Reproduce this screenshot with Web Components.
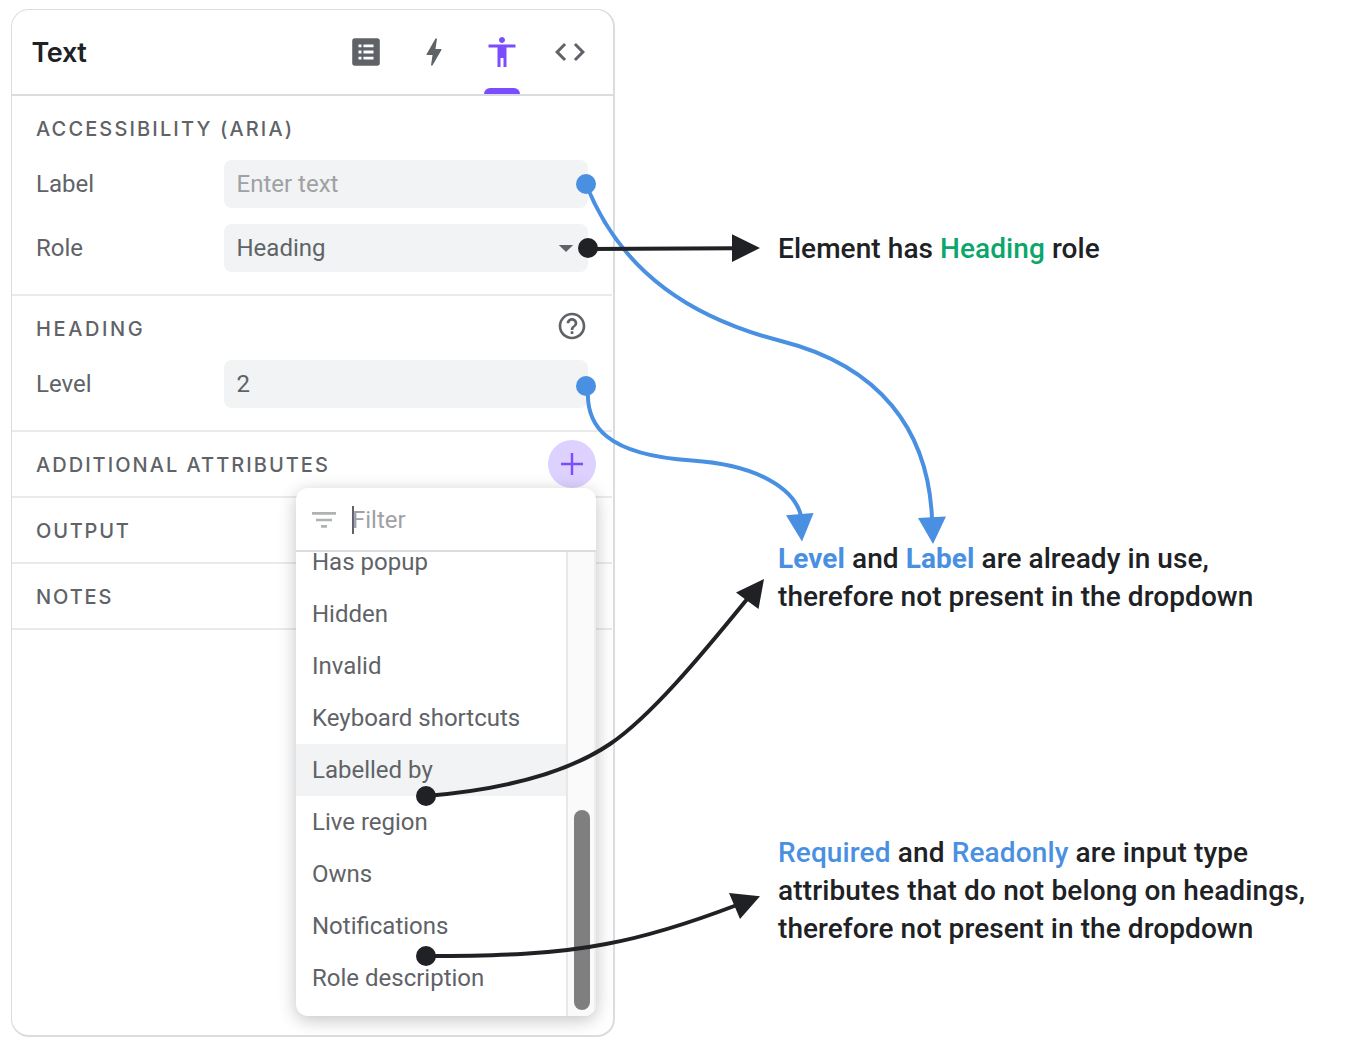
<!DOCTYPE html>
<html lang="en">
<head>
<meta charset="utf-8">
<title>Accessibility attributes</title>
<style>
html,body{margin:0;padding:0;background:#fff}
body{width:1360px;height:1048px;overflow:hidden;font-family:Roboto,"Liberation Sans",sans-serif}
</style>
</head>
<body>
<attribute-guide></attribute-guide>
<script>
const define = (name, css, html) => customElements.define(name, class extends HTMLElement {
  constructor() {
    super();
    const t = document.createElement('template');
    t.innerHTML = `<style>*{box-sizing:border-box}${css}</style>${html}`;
    this.attachShadow({mode: 'open'}).append(t.content.cloneNode(true));
  }
});

define('tab-icon', `
:host{display:flex;width:68px;height:84px;flex-direction:column;align-items:center;justify-content:space-between;color:#5f6368;padding-top:24px;box-sizing:border-box}
:host([active]){color:#7c4dff}
i{display:block;width:36px;height:6px;border-radius:6px 6px 0 0}
:host([active]) i{background:#7c4dff}
::slotted(svg){display:block;width:36px;height:36px;fill:currentColor}`,
`<slot></slot><i></i>`);

define('panel-header', `
:host{display:flex;height:86px;box-sizing:border-box;border-bottom:2px solid #dadce0;padding-left:19.5px;padding-right:9px;justify-content:space-between;align-items:center}
h1{margin:0;padding-top:2px;font:560 27px/36px Inter,sans-serif;letter-spacing:-.35px;color:#202124}
nav{display:flex}`,
`<h1><slot></slot></h1><nav>
<tab-icon><svg viewBox="0 0 24 24"><path fill-rule="evenodd" d="M4.6 2.8h14.8a1.8 1.8 0 0 1 1.8 1.8v14.8a1.8 1.8 0 0 1-1.8 1.8H4.6a1.8 1.8 0 0 1-1.8-1.8V4.6a1.8 1.8 0 0 1 1.8-1.8zM7 7v1.9h2V7zM10.3 7v1.9H17V7zM7 11v2h2v-2zM10.3 11v2H17v-2zM7 15.1V17h2v-1.9zM10.3 15.1V17H17v-1.9z"/></svg></tab-icon>
<tab-icon><svg viewBox="0 0 24 24"><path d="M11 21h-1l1-7H7.5c-.58 0-.57-.32-.38-.66.19-.34.05-.08.07-.12C8.48 10.94 10.42 7.54 13 3h1l-1 7h3.5c.49 0 .56.33.47.51l-.07.15C12.96 17.55 11 21 11 21z"/></svg></tab-icon>
<tab-icon active><svg viewBox="0 0 24 24"><path d="M12 2c1.1 0 2 .9 2 2s-.9 2-2 2-2-.9-2-2 .9-2 2-2zm9 7h-6v13h-2v-6h-2v6H9V9H3V7h18v2z"/></svg></tab-icon>
<tab-icon><svg viewBox="0 0 24 24"><path d="M9.4 16.6L4.8 12l4.6-4.6L8 6l-6 6 6 6 1.4-1.4zm5.2 0l4.6-4.6-4.6-4.6L16 6l6 6-6 6-1.4-1.4z"/></svg></tab-icon>
</nav>`);

define('panel-section', `
:host{display:block;border-bottom:2px solid #e8eaed;padding:0 24px;color:#5f6368}
header{display:flex;height:64px;align-items:center;justify-content:space-between}
h2{margin:0;font:500 20px/28px Inter,sans-serif;letter-spacing:var(--ls,2.6px);padding-top:2px}
.body{display:flex;flex-direction:column;gap:16px}
:host([filled]) .body{padding-bottom:22px}`,
`<header><h2><slot name="title"></slot></h2><slot name="action"></slot></header><div class="body"><slot></slot></div>`);

define('field-row', `
:host{display:flex;height:48px;align-items:center;font-size:24px;line-height:28px;color:#5f6368}
label{width:188px}
div{display:flex;width:364px;height:48px;border-radius:8px;background:#f1f3f4;padding:0 14px 0 12.5px;align-items:center;justify-content:space-between}
:host([empty]) div{color:#9fa1a4}
svg{display:none;width:16px;height:8px;fill:#5f6368}
:host([select]) svg{display:block}`,
`<label><slot name="label"></slot></label><div><span><slot></slot></span><svg viewBox="0 0 16 8"><path d="M.8 .9h14.400L8 7.900z"/></svg></div>`);

define('help-icon', `:host{display:block;width:32px;height:32px;margin-top:-4px}svg{display:block;fill:#5f6368}`,
`<svg width="32" height="32" viewBox="0 0 24 24"><path d="M11 18h2v-2h-2v2zm1-16C6.48 2 2 6.48 2 12s4.48 10 10 10 10-4.48 10-10S17.52 2 12 2zm0 18c-4.41 0-8-3.59-8-8s3.59-8 8-8 8 3.59 8 8-3.59 8-8 8zm0-14c-2.21 0-4 1.79-4 4h2c0-1.1.9-2 2-2s2 .9 2 2c0 2-3 1.75-3 5h2c0-2.25 3-2.5 3-5 0-2.21-1.79-4-4-4z"/></svg>`);

define('add-button', `:host{display:flex;width:48px;height:48px;border-radius:50%;background:#ddd2ff;align-items:center;justify-content:center;margin-right:-8px}svg{display:block}`,
`<svg width="24" height="24" viewBox="0 0 24 24" stroke="#7c4dff" stroke-width="2.4"><path d="M1 12h22M12 1v22"/></svg>`);

define('menu-item', `
:host{display:flex;height:52px;flex:none;align-items:center;padding-left:16px;font-size:24px;line-height:28px;color:#5f6368}
:host([hovered]){background:#f1f3f4}`, `<slot></slot>`);

define('filter-menu', `
:host{display:flex;flex-direction:column;width:300px;height:528px;border-radius:12px;background:#fff;box-shadow:0 4px 18px rgba(0,0,0,.24);overflow:hidden}
.search{display:flex;flex:none;height:64px;border-bottom:2px solid #dadce0;padding:2px 16px 0;align-items:center;gap:16px}
.icon{display:block}
.input{display:flex;height:28px;border-left:2px solid #5f6368;font-size:24px;line-height:28px;color:#9fa1a4}
.input span{margin-left:-2px}
.scroll{display:flex;flex:1;min-height:0;overflow:hidden}
.list{display:flex;flex-direction:column;flex:1;margin-top:-16px}
.bar{display:flex;width:30px;background:#fafafa;border-left:2px solid #e8e8e8;border-right:2px solid #ededed;align-items:flex-end;padding:0 0 6px 6px}
.bar i{display:block;width:16px;height:200px;border-radius:8px;background:#7f7f7f}`,
`<div class="search"><svg class="icon" width="24" height="16" viewBox="0 0 24 16" fill="#b0b2b4"><path d="M0 0h24v2.7H0zM4 6.8h16v2.4H4zM9 13.1h6v2.7H9z"/></svg><div class="input"><span>Filter</span></div></div>
<div class="scroll"><div class="list"><slot></slot></div><div class="bar"><i></i></div></div>`);

define('properties-panel', `
:host{display:flex;flex-direction:column;position:relative;width:604px;height:1028px;flex:none;box-sizing:border-box;border:1px solid #dadce0;border-right:2px solid #dadce0;border-bottom:2px solid #dadce0;border-radius:18px;background:#fff;overflow:hidden}
filter-menu{position:absolute;left:284px;top:478px}
.sections{margin-right:1px}
.aria{--ls:2.13px}.attributes{--ls:2.03px}.output{--ls:1.8px}.remarks{--ls:1.9px}`,
`<panel-header>Text</panel-header>
<div class="sections">
<panel-section filled class="aria"><span slot="title">ACCESSIBILITY (ARIA)</span>
<field-row empty><span slot="label">Label</span>Enter text</field-row>
<field-row select><span slot="label">Role</span>Heading</field-row></panel-section>
<panel-section filled><span slot="title">HEADING</span><help-icon slot="action"></help-icon>
<field-row><span slot="label">Level</span>2</field-row></panel-section>
<panel-section class="attributes"><span slot="title">ADDITIONAL ATTRIBUTES</span><add-button slot="action"></add-button></panel-section>
<panel-section class="output"><span slot="title">OUTPUT</span></panel-section>
<panel-section class="remarks"><span slot="title">NOTES</span></panel-section>
</div>
<filter-menu>
<menu-item>Has popup</menu-item><menu-item>Hidden</menu-item><menu-item>Invalid</menu-item><menu-item>Keyboard shortcuts</menu-item><menu-item hovered>Labelled by</menu-item><menu-item>Live region</menu-item><menu-item>Owns</menu-item><menu-item>Notifications</menu-item><menu-item>Role description</menu-item>
</filter-menu>`);

define('side-note', `
:host{display:block;font-size:28px;font-weight:500;line-height:38px;color:#202124;white-space:nowrap;letter-spacing:var(--note-ls,.07px)}
::slotted(b){color:#4a90e2;font-weight:700}
::slotted(em){color:#4a90e2;font-style:normal}
::slotted(strong){color:#0aa66c;font-weight:500}`, `<slot></slot>`);

define('connector-layer', `:host{display:block;position:absolute;left:0;top:0;pointer-events:none}svg{display:block}`,
`<svg width="1360" height="1048" viewBox="0 0 1360 1048" fill="none" stroke-width="4">
<g stroke="#4a90e2"><path d="M586 184C622 275 695 319 781 341C880 366 928 430 932 518"/><path d="M588 390C586 425 605 455 692 460.500C760 465 795 490 801 516"/></g>
<g fill="#4a90e2"><circle cx="586" cy="184" r="10"/><circle cx="586" cy="386" r="10"/><path d="M918 518l28-1.500L933 544zM786 515.300l27.600-2.300L802 541.500z"/></g>
<g stroke="#202124"><path d="M588 249L734 248.200M426 796C510 789 570 771 610 744C650 717 700 657 748 598M426 956C500 956 555 954 606 944C650 936 695 921 737 905"/></g>
<g fill="#202124"><circle cx="588" cy="248" r="10"/><circle cx="426" cy="796" r="10"/><circle cx="426" cy="956" r="10"/><path d="M732 234.300L760 248l-28 14zM764 579l-28 13.400L758.500 609zM729 893l31 3.300L740 919z"/></g>
</svg>`);

define('attribute-guide', `
:host{display:flex;position:relative;width:1360px;height:1048px;padding:9px 0 0 11px;gap:163px;box-sizing:border-box}
.notes{display:flex;flex-direction:column;padding-top:221px}
.n2{margin-top:272px}.n3{margin-top:218px;--note-ls:.13px}
.n3 span{letter-spacing:.07px}`,
`<properties-panel></properties-panel>
<div class="notes">
<side-note>Element has <strong>Heading</strong> role</side-note>
<side-note class="n2"><b>Level</b> and <b>Label</b> are already in use,<br>therefore not present in the dropdown</side-note>
<side-note class="n3"><em>Required</em> and <em>Readonly</em> are input type<br>attributes that do not belong on headings,<br><span>therefore not present in the dropdown</span></side-note>
</div>
<connector-layer></connector-layer>`);
</script>
</body>
</html>
